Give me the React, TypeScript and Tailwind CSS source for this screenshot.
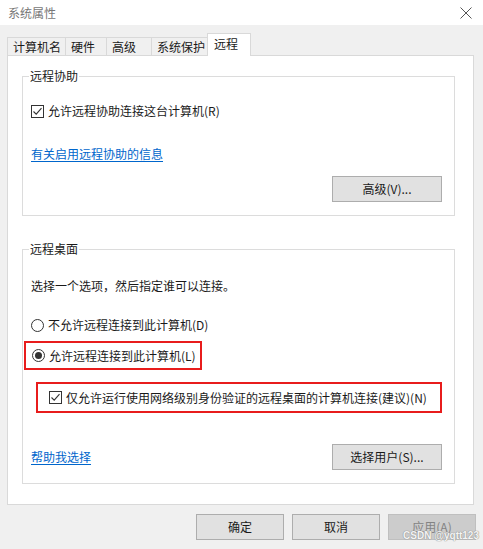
import React from "react"

const font = { fontFamily: '"Noto Sans CJK SC", "Noto Sans", sans-serif' }

function CheckBox() {
  return (
    <span className="w-[13px] h-[13px] border border-[#333333] bg-white flex items-center justify-center flex-shrink-0">
      <svg width="11" height="11" viewBox="0 0 11 11" fill="none">
        <path d="M1.5 5.5 L4.2 8.2 L9.5 2.2" stroke="#333333" strokeWidth="1.1" />
      </svg>
    </span>
  )
}

function Radio({ checked }: { checked?: boolean }) {
  return (
    <span className="w-[13px] h-[13px] rounded-full border border-[#333333] bg-white flex items-center justify-center flex-shrink-0">
      {checked && <span className="w-[7px] h-[7px] rounded-full bg-[#333333]" />}
    </span>
  )
}

function Btn({ children, disabled }: { children: React.ReactNode; disabled?: boolean }) {
  return (
    <div
      className={
        disabled
          ? "w-[88px] h-[26px] flex items-center justify-center border border-[#bfbfbf] bg-[#cccccc] text-[#838383]"
          : "w-[88px] h-[26px] flex items-center justify-center border border-[#adadad] bg-[#e1e1e1] text-[#1a1a1a]"
      }
    >
      {children}
    </div>
  )
}

function Group({ title, children, className }: { title: string; children: React.ReactNode; className?: string }) {
  return (
    <div className={"relative border border-[#dcdcdc] " + (className ?? "")}>
      <span className="absolute -top-[9px] left-[6px] bg-white px-[1px] leading-[16px] text-[#1a1a1a]">{title}</span>
      {children}
    </div>
  )
}

const tabs = [
  { label: "计算机名", w: "w-[58px]" },
  { label: "硬件", w: "w-[41px]" },
  { label: "高级", w: "w-[45px]" },
  { label: "系统保护", w: "w-[56px]" },
]

export default function App() {
  return (
    <div className="relative w-[483px] h-[549px] bg-[#f0f0f0] text-[12px] flex flex-col" style={font}>
      {/* title bar */}
      <div className="h-[25px] bg-white flex items-center justify-between pl-[8px] pr-[11px]">
        <span className="text-[#777777] text-[12px]">系统属性</span>
        <svg width="12" height="12" viewBox="0 0 12 12" className="mt-[1px]">
          <path d="M0.5 0.5 L11.5 11.5 M11.5 0.5 L0.5 11.5" stroke="#555555" strokeWidth="1" />
        </svg>
      </div>

      {/* tabs */}
      <div className="flex items-end mt-[8px] pl-[7px] h-[23px] relative z-10">
        {tabs.map((t) => (
          <div
            key={t.label}
            className={t.w + " h-[18px] border-t border-l border-[#d9d9d9] bg-[#f0f0f0] pl-[5px] leading-[17px] text-[#1a1a1a] mb-[1px]"}
          >
            {t.label}
          </div>
        ))}
        <div className="w-[44px] h-[23px] border-t border-l border-r border-[#d9d9d9] bg-white pl-[6px] leading-[20px] text-[#1a1a1a]">
          远程
        </div>
      </div>

      {/* panel */}
      <div className="mx-[7px] -mt-[1px] h-[450px] w-[467px] bg-white border border-[#d9d9d9] pl-[14px] pr-[18px] pt-[20px]">
        <Group title="远程协助" className="h-[140px] px-[8px] pt-[24px]">
          <div className="flex items-center gap-[4px] h-[20px] text-[#1a1a1a]">
            <CheckBox />
            <span>允许远程协助连接这台计算机(R)</span>
          </div>
          <div className="mt-[25px] leading-[16px] text-[#0066cc] underline underline-offset-2">有关启用远程协助的信息</div>
          <div className="flex justify-end mt-[14px] pr-[4px]">
            <div className="w-[110px] h-[26px] flex items-center justify-center border border-[#adadad] bg-[#e1e1e1] text-[#1a1a1a]">
              高级(V)...
            </div>
          </div>
        </Group>

        <Group title="远程桌面" className="mt-[33px] h-[235px] px-[8px] pt-[27px]">
          <div className="leading-[18px] text-[#1a1a1a]">选择一个选项，然后指定谁可以连接。</div>
          <div className="flex items-center gap-[4px] h-[20px] mt-[20px] text-[#1a1a1a]">
            <Radio />
            <span>不允许远程连接到此计算机(D)</span>
          </div>
          <div className="-ml-[7px] mt-[6px] w-[178px] h-[29px] border-2 border-[#e81c1c] flex items-center gap-[4px] pl-[6px] text-[#1a1a1a]">
            <Radio checked />
            <span>允许远程连接到此计算机(L)</span>
          </div>
          <div className="ml-[5px] mt-[12px] w-[406px] h-[31px] border-2 border-[#e81c1c] flex items-center gap-[4px] pl-[11px] text-[#1a1a1a]">
            <CheckBox />
            <span>仅允许运行使用网络级别身份验证的远程桌面的计算机连接(建议)(N)</span>
          </div>
          <div className="flex items-center justify-between mt-[31px] pr-[4px]">
            <span className="text-[#0066cc] underline underline-offset-2 leading-[16px]">帮助我选择</span>
            <div className="w-[110px] h-[26px] flex items-center justify-center border border-[#adadad] bg-[#e1e1e1] text-[#1a1a1a]">
              选择用户(S)...
            </div>
          </div>
        </Group>
      </div>

      {/* bottom buttons */}
      <div className="flex justify-end gap-[8px] pr-[7px] mt-[9px]">
        <Btn>确定</Btn>
        <Btn>取消</Btn>
        <Btn disabled>应用(A)</Btn>
      </div>

      <span
        className="absolute right-[4px] bottom-[7px] text-[10px] font-bold leading-[12px] text-[#f4f4f4]"
        style={{ textShadow: "0 0 1px #8a8a8a, 0 0 1px #8a8a8a", fontFamily: '"Liberation Sans", sans-serif' }}
      >
        CSDN @yqtt123
      </span>
    </div>
  )
}
